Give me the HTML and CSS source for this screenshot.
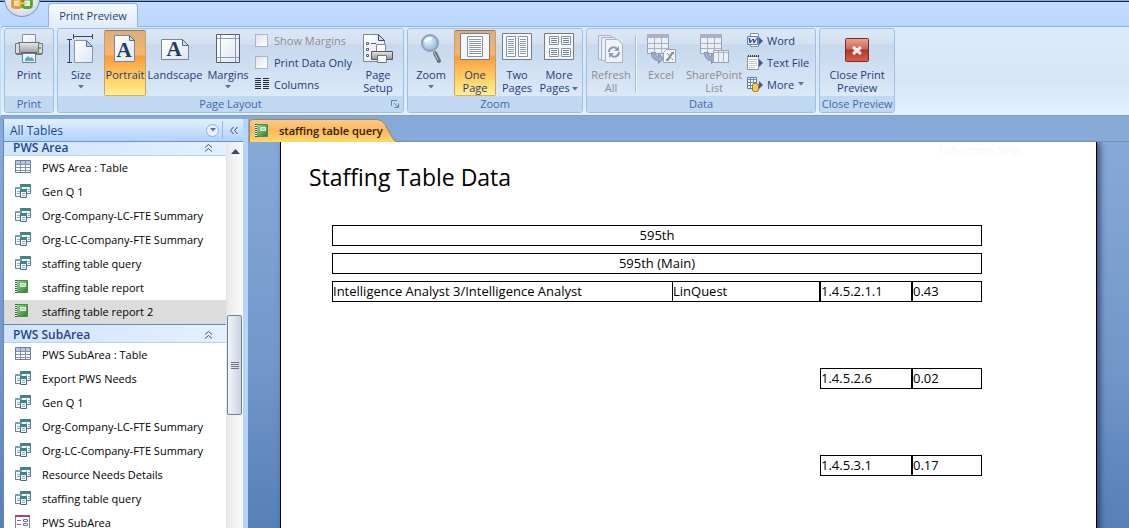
FILE: index.html
```html
<!DOCTYPE html>
<html lang="en">
<head>
  <meta charset="UTF-8" />
  <meta name="viewport" content="width=device-width, initial-scale=1.0"/>
  <title>Print Preview - staffing table query</title>
  <link rel="stylesheet" href="styles.css">
</head>
<body>

<!-- Shared icons -->
<svg class="defs" aria-hidden="true">
  <defs>
    <linearGradient id="paper" x1="0" y1="0" x2="1" y2="1">
      <stop offset="0" stop-color="#fff"/><stop offset="1" stop-color="#dfe6f2"/>
    </linearGradient>
    <linearGradient id="green" x1="0" y1="0" x2="1" y2="1">
      <stop offset="0" stop-color="#9bd690"/><stop offset="1" stop-color="#2f7d35"/>
    </linearGradient>
    <linearGradient id="red" x1="0" y1="0" x2="0" y2="1">
      <stop offset="0" stop-color="#e9a596"/><stop offset=".45" stop-color="#cf6456"/>
      <stop offset=".5" stop-color="#b23528"/><stop offset="1" stop-color="#d8604c"/>
    </linearGradient>
    <linearGradient id="metal" x1="0" y1="0" x2="0" y2="1">
      <stop offset="0" stop-color="#e9e9ea"/><stop offset="1" stop-color="#8e9096"/>
    </linearGradient>
    <radialGradient id="lens" cx=".4" cy=".35" r=".7">
      <stop offset="0" stop-color="#eaf6ff"/><stop offset="1" stop-color="#86b2dd"/>
    </radialGradient>
  </defs>
  <symbol id="i-table" viewBox="0 0 16 16">
    <path fill="#fff" stroke="#6b7ba8" d="M.5 1.500h15v12H.5z"/>
    <path fill="#b9c4e4" d="M1 2h14v3H1z"/>
    <path stroke="#8090bb" d="M1 5.500h14M1 8.500h14M1 11.500h14M5.500 2v11M10.500 2v11"/>
  </symbol>
  <symbol id="i-query" viewBox="0 0 16 16">
    <path fill="#f5fbfc" stroke="#5f8297" d="M5.500 1.500h10v9h-10z"/>
    <path fill="#3f8581" d="M5 1h11v3H5z"/>
    <path stroke="#8aaabb" d="M11.500 5v5M13 6.500h2M13 8.500h2"/>
    <path fill="#f5f9ff" stroke="#647fa0" d="M.5 4.500h6v9h-6z"/>
    <path fill="#7f9fb7" d="M0 4h7v2H0z"/>
    <path stroke="#8fa9c6" d="M2 8.500h3M2 10.500h3"/>
    <path fill="#f5f9ff" stroke="#44708b" d="M5.500 6.500h6v8h-6z"/>
    <path fill="#3f8581" d="M5 6h7v3H5z"/>
    <path stroke="#8fa9c6" d="M7 10.500h3M7 12.500h3"/>
  </symbol>
  <symbol id="i-report" viewBox="0 0 16 16">
    <path fill="url(#green)" stroke="#4c8a4a" d="M1.500 1.500h11v12h-11z"/>
    <path fill="#a9d8a0" stroke="#e3f3de" d="M5.500 4.500h5v3h-5z"/>
    <path stroke="#f4f8f2" stroke-width="2" d="M1 1v13"/>
    <path stroke="#31593a" stroke-width="2" stroke-dasharray="1 1" d="M1 1v13"/>
  </symbol>
  <symbol id="i-form" viewBox="0 0 16 16">
    <path fill="#fff" stroke="#7a7fb8" d="M.5 1.500h14v13H.5z"/>
    <path fill="#b0426f" d="M0 1h15v2H0z"/>
    <path stroke="#6d76b5" fill="none" d="M2 6.500h4M2 10.500h4M8.500 5.500h4v2h-4zM8.500 9.500h4v2h-4z"/>
  </symbol>
  <symbol id="i-up" viewBox="0 0 9 9">
    <path fill="none" stroke="#3b4f7b" d="M1 4.500l3.500-3 3.500 3M1 8.500l3.500-3 3.500 3"/>
  </symbol>
  <symbol id="i-down" viewBox="0 0 6 4">
    <path fill="#5c7396" d="M0 0h6L3 3.500z"/>
  </symbol>
  <symbol id="i-grid" viewBox="0 0 32 32">
    <path fill="#eceff6" stroke="#98a1b8" d="M2.500 1.500h21v19h-21z"/>
    <path fill="#a9b1c5" d="M2 1h22v4H2z"/>
    <path stroke="#a8b1c6" d="M3 10.500h20M3 15.500h20M9.500 1v20M16.500 1v20"/>
    <path fill="#a0abc8" stroke="#8491b5" d="M6.500 19.500h4c0 3 1 4 3 4v-3l5 5-5 5v-3c-5 0-7-3-7-8z"/>
  </symbol>
</svg>

<div class="titlebar">
  <button class="office" aria-label="Office Button">
    <svg viewBox="0 0 36 36">
      <rect x="8" y="18" width="9" height="9" rx="2" fill="#fbe6bd" stroke="#e59a2b" stroke-width="3"/>
      <rect x="19" y="18" width="9" height="9" rx="2" fill="#e9f6df" stroke="#5d9f3a" stroke-width="3"/>
      <path stroke="#f2c45c" stroke-width="2" d="M13 22.500h10"/>
    </svg>
  </button>
  <button class="ribbon-tab">Print Preview</button>
</div>

<!-- Ribbon -->
<div class="ribbon">
  <section class="group">
    <div class="group-body">
      <button class="big w-print">
        <svg viewBox="0 0 32 32">
          <path fill="url(#paper)" stroke="#888e99" d="M9.500 12V1.500h13V12z"/>
          <path fill="url(#metal)" stroke="#6d6f75" d="M5.500 9.500h21l2 3v9h-25v-9z"/>
          <path fill="#d9dadd" stroke="#777" d="M2.500 10.500h4v10h-4zM25.500 10.500h4v10h-4z"/>
          <path fill="#5f6167" d="M8 19h16v2H8z"/>
          <path fill="#eaf4fc" stroke="#6a7c90" d="M9.500 20.500h13v9h-13z"/>
          <path fill="#5fa4c4" d="M12 26l3-3 2 2 2-1 2 3v1h-9z"/>
          <path fill="#62b548" d="M26 14h2v2h-2z"/>
        </svg>
        <span>Print</span>
      </button>
    </div>
    <h2>Print</h2>
  </section>

  <section class="group tools">
    <div class="group-body">
      <button class="big w-size">
        <svg viewBox="0 0 32 32">
          <path stroke="#35466e" d="M9 3.500h18M8.500 1v5M27.500 1v5M4.500 7v22M2 6.500h5M2 29.500h5"/>
          <path fill="url(#paper)" stroke="#8794ab" d="M9.500 7.500h12l6 6v16h-18z"/>
          <path fill="#b8cae6" stroke="#5b7096" d="M21.500 7.500v6h6z"/>
        </svg>
        <span>Size</span>
        <svg class="drop"><use href="#i-down"/></svg>
      </button>
      <button class="big w-mid active">
        <svg viewBox="0 0 32 32">
          <path fill="url(#paper)" stroke="#7c869b" d="M5.500 2.500h15l5 5v21h-20z"/>
          <path fill="#cfdcf0" stroke="#56698c" d="M20.500 2.500v5h5z"/>
          <text class="letter" x="15" y="24" text-anchor="middle">A</text>
        </svg>
        <span>Portrait</span>
      </button>
      <button class="big w-land">
        <svg viewBox="0 0 32 32">
          <path fill="url(#paper)" stroke="#7c869b" d="M2.500 6.500h21l6 6v14h-27z"/>
          <path fill="#cfdcf0" stroke="#56698c" d="M23.500 6.500v6h6z"/>
          <text class="letter" x="15" y="23" text-anchor="middle">A</text>
        </svg>
        <span>Landscape</span>
      </button>
      <button class="big w-print">
        <svg viewBox="0 0 32 32">
          <path fill="url(#paper)" stroke="#555e6e" d="M4.500 1.500h23v28h-23z"/>
          <path stroke="#8e9bb5" d="M8.500 2v27M23.500 2v27M5 5.500h22M5 24.500h22"/>
        </svg>
        <span>Margins</span>
        <svg class="drop"><use href="#i-down"/></svg>
      </button>
      <div class="stack checks">
        <label class="off"><input type="checkbox" disabled> Show Margins</label>
        <label><input type="checkbox"> Print Data Only</label>
        <button class="small">
          <svg viewBox="0 0 16 16"><path stroke="#222b3a" d="M1 2.500h6M9 2.500h6M1 4.500h6M9 4.500h6M1 6.500h6M9 6.500h6M1 8.500h6M9 8.500h6M1 10.500h6M9 10.500h6M1 12.500h6M9 12.500h6"/></svg>
          Columns
        </button>
      </div>
      <button class="big w-size">
        <svg viewBox="0 0 32 32">
          <path fill="url(#paper)" stroke="#7b879d" d="M1.500 1.500h15l6 6v21h-21z"/>
          <path fill="#cfdcf0" stroke="#3c4c6b" d="M16.500 1.500v6h6z"/>
          <path fill="#fff" stroke="#55607a" d="M4.500 9.500h2v2h-2zM4.500 15.500h2v2h-2zM4.500 21.500h2v2h-2z"/>
          <path stroke="#55607a" d="M9 10.500h5"/>
          <path fill="#fff" stroke="#888" d="M14.500 19v-7.500h9V19z"/>
          <path fill="url(#metal)" stroke="#55575d" d="M9.500 18.500h21v8h-21z"/>
          <path fill="#fff" stroke="#6d7587" d="M15.500 22.500h9v7h-9z"/>
        </svg>
        <span>Page<br>Setup</span>
      </button>
    </div>
    <h2>Page Layout</h2>
    <button class="launcher" aria-label="Page Setup dialog">
      <svg viewBox="0 0 8 8"><path fill="none" stroke="#6484b0" d="M.5 6V.5H6M3 3l4 4M7.500 3.500v4h-4"/></svg>
    </button>
  </section>

  <section class="group tools">
    <div class="group-body">
      <button class="big w-size">
        <svg viewBox="0 0 32 32">
          <path stroke="#6d727c" stroke-width="4" stroke-linecap="round" d="M20 20l4 8"/>
          <path stroke="#c5c9d1" d="M19 19l4 8"/>
          <circle cx="15" cy="10" r="8" fill="url(#lens)" stroke="#8ea0bb" stroke-width="2"/>
          <path fill="none" stroke="#fff" stroke-width="2" d="M10 9c1-3 4-4 7-3"/>
        </svg>
        <span>Zoom</span>
        <svg class="drop"><use href="#i-down"/></svg>
      </button>
      <button class="big w-mid active">
        <svg viewBox="0 0 32 32">
          <path fill="#f5f6fa" stroke="#747d90" d="M1.500.5h29v26h-29z"/>
          <path fill="#fff" stroke="#8791a5" d="M8.500 3.500h15v20h-15z"/>
          <path stroke="#8b98b0" d="M10 6.500h12M10 8.500h12M10 10.500h12M10 12.500h12M10 14.500h12M10 16.500h12M10 18.500h12M10 20.500h12"/>
        </svg>
        <span>One<br>Page</span>
      </button>
      <button class="big w-mid">
        <svg viewBox="0 0 32 32">
          <path fill="#f5f6fa" stroke="#747d90" d="M1.500.5h29v26h-29z"/>
          <path fill="#fff" stroke="#8791a5" d="M5.500 3.500h9v20h-9zM17.500 3.500h9v20h-9z"/>
          <path stroke="#8b98b0" d="M7 6.500h6M7 8.500h6M7 10.500h6M7 12.500h6M7 14.500h6M7 16.500h6M7 18.500h6M7 20.500h6M19 6.500h6M19 8.500h6M19 10.500h6M19 12.500h6M19 14.500h6M19 16.500h6M19 18.500h6M19 20.500h6"/>
        </svg>
        <span>Two<br>Pages</span>
      </button>
      <button class="big w-mid">
        <svg viewBox="0 0 32 32">
          <path fill="#f5f6fa" stroke="#747d90" d="M1.500.5h29v26h-29z"/>
          <path fill="#fff" stroke="#8791a5" d="M6.500 3.500h9v8h-9zM18.500 3.500h9v8h-9zM6.500 15.500h9v8h-9zM18.500 15.500h9v8h-9z"/>
          <path stroke="#6f7f9c" d="M8 5.500h6M8 7.500h6M8 9.500h6M20 5.500h6M20 7.500h6M20 9.500h6M8 17.500h6M8 19.500h6M8 21.500h6M20 17.500h6M20 19.500h6M20 21.500h6"/>
        </svg>
        <span>More<br>Pages <svg class="drop"><use href="#i-down"/></svg></span>
      </button>
    </div>
    <h2>Zoom</h2>
  </section>

  <section class="group tools">
    <div class="group-body">
      <button class="big w-print" disabled>
        <svg viewBox="0 0 32 32">
          <path fill="#e6ebf4" stroke="#a9b3c6" d="M3.500 2.500h12l4 4v20h-16z"/>
          <path fill="#e9edf5" stroke="#a9b3c6" d="M6.500 4.500h13l4 4v19h-17z"/>
          <path fill="#f1f3f8" stroke="#a9b3c6" d="M10.500 6.500h12l5 5v18h-17z"/>
          <path fill="none" stroke="#949cad" stroke-width="2" d="M14 19c0-5 6-6 8-3M24 19c0 5-6 6-8 3"/>
          <path fill="#949cad" d="M24 13v5h-5zM14 25v-5h5z"/>
        </svg>
        <span>Refresh<br>All</span>
      </button>
      <div class="separator"></div>
      <button class="big w-print" disabled>
        <svg viewBox="0 0 32 32">
          <use href="#i-grid"/>
          <path fill="#f2f4f8" stroke="#98a1b5" d="M18.500 19.500l3-3h9v13h-12z"/>
          <path stroke="#858f9f" stroke-width="2" d="M21 27h2l4-7h2"/>
          <path stroke="#858f9f" d="M22 20l6 7"/>
        </svg>
        <span>Excel</span>
      </button>
      <button class="big w-land" disabled>
        <svg viewBox="0 0 32 32">
          <use href="#i-grid"/>
          <path fill="#eceff6" stroke="#98a1b8" d="M15.500 17.500h15v12h-15z"/>
          <path stroke="#a8b1c6" d="M16 19.500h14M20.500 18v12M25.500 18v12"/>
        </svg>
        <span>SharePoint<br>List</span>
      </button>
      <div class="stack">
        <button class="small">
          <svg viewBox="0 0 16 16">
            <path fill="#fff" stroke="#7e8fb0" d="M3.500 1.500h8v13h-8z"/>
            <path fill="#e7edf8" stroke="#627cae" d="M.5 4.500h10v8H.5z"/>
            <path fill="none" stroke="#24448b" d="M2 6l1 5 3-4 1 4 3-5M2.500 6l1 4M6.500 7l1 3"/>
            <path fill="#3b5c98" d="M12 5l4 4-4 4z"/>
          </svg>
          Word
        </button>
        <button class="small">
          <svg viewBox="0 0 16 16">
            <path fill="#fff" stroke="#8b94a5" d="M.5 2.500h11v13H.5z"/>
            <path stroke="#333c4c" stroke-width="2" stroke-dasharray="1 1" d="M1 2h11"/>
            <path stroke="#c3cbd9" d="M2 5.500h8M2 7.500h8M2 9.500h8M2 11.500h8M2 13.500h6"/>
            <path fill="#3b5c98" d="M12 5l4 4-4 4z"/>
          </svg>
          Text File
        </button>
        <button class="small">
          <svg viewBox="0 0 16 16">
            <path fill="#fff" stroke="#5e78ab" d="M.5 1.500h9v11h-9z"/>
            <path stroke="#6b84b5" d="M1 3.500h8M1 6.500h8M1 9.500h8M3.500 2v10M6.500 2v10"/>
            <path fill="#f3cb54" stroke="#a37c1f" d="M5.500 8.500c1-1.500 5-1.500 6 0v6c-1 1.500-5 1.500-6 0z"/>
            <path fill="#3b5c98" d="M12 5l4 4-4 4z"/>
          </svg>
          More <svg class="drop"><use href="#i-down"/></svg>
        </button>
      </div>
    </div>
    <h2>Data</h2>
  </section>

  <section class="group">
    <div class="group-body">
      <button class="big w-close">
        <svg viewBox="0 0 32 32">
          <rect x="4.500" y="5.500" width="23" height="23" rx="1" fill="url(#red)" stroke="#7c2a24"/>
          <path stroke="#f7efee" stroke-width="3" d="M12 14l8 7M20 14l-8 7"/>
        </svg>
        <span>Close Print<br>Preview</span>
      </button>
    </div>
    <h2>Close Preview</h2>
  </section>
</div>

<div class="workspace">

  <!-- Navigation Pane -->
  <aside class="nav-pane">
    <header class="nav-header">
      <span>All Tables</span>
      <button class="nav-menu" aria-label="Choose objects"><svg class="drop"><use href="#i-down"/></svg></button>
      <button class="nav-close" aria-label="Close pane">
        <svg viewBox="0 0 9 9"><path fill="none" stroke="#3b4f7b" d="M4.500 1l-3 3.500 3 3.500M8.500 1l-3 3.500 3 3.500"/></svg>
      </button>
    </header>
    <div class="nav-body">
      <div class="nav-list">
        <h3>PWS Area <svg><use href="#i-up"/></svg></h3>
        <ul>
          <li><a href="#"><svg><use href="#i-table"/></svg>PWS Area : Table</a></li>
          <li><a href="#"><svg><use href="#i-query"/></svg>Gen Q 1</a></li>
          <li><a href="#"><svg><use href="#i-query"/></svg>Org-Company-LC-FTE Summary</a></li>
          <li><a href="#"><svg><use href="#i-query"/></svg>Org-LC-Company-FTE Summary</a></li>
          <li><a href="#"><svg><use href="#i-query"/></svg>staffing table query</a></li>
          <li><a href="#"><svg><use href="#i-report"/></svg>staffing table report</a></li>
          <li><a href="#" class="selected"><svg><use href="#i-report"/></svg>staffing table report 2</a></li>
        </ul>
        <h3>PWS SubArea <svg><use href="#i-up"/></svg></h3>
        <ul>
          <li><a href="#"><svg><use href="#i-table"/></svg>PWS SubArea : Table</a></li>
          <li><a href="#"><svg><use href="#i-query"/></svg>Export PWS Needs</a></li>
          <li><a href="#"><svg><use href="#i-query"/></svg>Gen Q 1</a></li>
          <li><a href="#"><svg><use href="#i-query"/></svg>Org-Company-LC-FTE Summary</a></li>
          <li><a href="#"><svg><use href="#i-query"/></svg>Org-LC-Company-FTE Summary</a></li>
          <li><a href="#"><svg><use href="#i-query"/></svg>Resource Needs Details</a></li>
          <li><a href="#"><svg><use href="#i-query"/></svg>staffing table query</a></li>
          <li><a href="#"><svg><use href="#i-form"/></svg>PWS SubArea</a></li>
        </ul>
      </div>
      <div class="scrollbar">
        <svg class="scroll-up" viewBox="0 0 9 5"><path fill="#3f4860" d="M0 5l4.500-5L9 5z"/></svg>
        <div class="thumb"><i></i></div>
      </div>
    </div>
  </aside>

  <main class="document">
    <div class="doc-tabs">
      <button class="doc-tab">
        <svg class="tab-shape" viewBox="0 0 148 23" preserveAspectRatio="none">
          <defs>
            <linearGradient id="tab" x1="0" y1="0" x2="0" y2="1">
              <stop offset="0" stop-color="#fbc98c"/><stop offset=".5" stop-color="#fdb75d"/><stop offset="1" stop-color="#ffd968"/>
            </linearGradient>
          </defs>
          <path fill="url(#tab)" stroke="#a98353" d="M.5 23V3.500q0-3 3-3H128q5 0 8 5l6 11q3 6 6 6.500"/>
        </svg>
        <svg class="tab-icon"><use href="#i-report"/></svg>
        <span>staffing table query</span>
      </button>
    </div>
    <div class="canvas">
      <article class="page">
        <span class="snip">Full-screen Snip</span>
        <h1>Staffing Table Data</h1>
        <table>
          <colgroup>
            <col class="col-job">
            <col class="col-company">
            <col class="col-area">
            <col>
          </colgroup>
          <thead>
            <tr><th colspan="4"><div class="box">595th</div></th></tr>
            <tr><th colspan="4"><div class="box">595th (Main)</div></th></tr>
          </thead>
          <tbody>
            <tr>
              <td><div class="box open">Intelligence Analyst 3/Intelligence Analyst</div></td>
              <td><div class="box">LinQuest</div></td>
              <td><div class="box">1.4.5.2.1.1</div></td>
              <td><div class="box">0.43</div></td>
            </tr>
            <tr>
              <td></td>
              <td></td>
              <td><div class="box">1.4.5.2.6</div></td>
              <td><div class="box">0.02</div></td>
            </tr>
            <tr>
              <td></td>
              <td></td>
              <td><div class="box">1.4.5.3.1</div></td>
              <td><div class="box">0.17</div></td>
            </tr>
          </tbody>
        </table>
      </article>
    </div>
  </main>
</div>

</body>
</html>
```
FILE: styles.css
```css
/* Global styles */
* {
  box-sizing: border-box;
}

body {
  margin: 0;
  height: 100vh;
  display: flex;
  flex-direction: column;
  overflow: hidden;
  font-family: "Open Sans", "Noto Sans", sans-serif;
  font-size: 11px;
  color: #1e3c7b;
  background-color: #bfdbff;
}

button {
  font: inherit;
  color: inherit;
  background: none;
  border: 1px solid transparent;
  padding: 0;
  margin: 0;
}

svg {
  display: block;
  flex: none;
}

h1, h2, h3, ul {
  margin: 0;
  padding: 0;
  font-weight: normal;
}

.defs {
  position: absolute;
  width: 0;
  height: 0;
}

.drop {
  width: 6px;
  height: 4px;
}

/* Title bar and ribbon tab */
.titlebar {
  position: relative;
  flex: none;
  height: 26px;
  padding: 2px 0 0 48px;
  border-top: 1px solid #8ba5c9;
  background: linear-gradient(#13284d 0, #13284d 1px, #c3dcff 1px, #bad6fc 100%);
}

.office {
  position: absolute;
  left: 4px;
  top: -20px;
  width: 36px;
  height: 36px;
  border-radius: 50%;
  border-color: #7d93b5;
  background: radial-gradient(circle at 50% 40%, #fff, #dfe6f0 60%, #b5c4d9);
}

.ribbon-tab {
  height: 24px;
  width: 90px;
  border: 1px solid #8db2e3;
  border-bottom: none;
  border-radius: 4px 4px 0 0;
  background: linear-gradient(#f4f9ff, #e0ecfa);
}

/* Ribbon */
.ribbon {
  flex: none;
  display: flex;
  gap: 3px;
  height: 90px;
  margin-left: 1px;
  padding: 1px 3px 2px;
  border-top: 1px solid #8db2e3;
  border-bottom: 1px solid #7f9fc9;
  border-top-left-radius: 4px;
  background: linear-gradient(#dcebfb, #d5e6f9 60%, #e0f2ff);
}

.group {
  position: relative;
  display: flex;
  flex-direction: column;
  border: 1px solid #9fbfe0;
  border-radius: 3px;
  background: linear-gradient(#dde8f5 0, #d3e0f0 15px, #c7d8ed 16px, #dbe9f8 68px);
  overflow: hidden;
}

.group h2 {
  flex: none;
  height: 16px;
  line-height: 16px;
  font-size: 11px;
  text-align: center;
  white-space: nowrap;
  color: #3e6aaa;
  background-color: #c1d8f1;
}

.group-body {
  display: flex;
  flex: 1;
  min-height: 0;
  padding-top: 1px;
}

.tools .group-body {
  padding-right: 2px;
}

.big {
  display: flex;
  flex-direction: column;
  align-items: center;
  height: 66px;
  padding-top: 2px;
  line-height: 13px;
  white-space: nowrap;
  border-radius: 2px;
}

.big > svg:first-child {
  width: 32px;
  height: 32px;
  margin-bottom: 3px;
}

.big > .drop {
  margin-top: 4px;
}

.big span .drop,
.small .drop {
  display: inline-block;
  vertical-align: middle;
}

.big:disabled {
  color: #8d8d8d;
}

.big.active {
  border-color: #8e7957 #c2a265 #d9b34f;
  background: linear-gradient(#dcae7d 0, #fbb569 24px, #fb9b3d 25px, #ffd56a 50px, #fff09a 100%);
}

.w-print { width: 48px; }
.w-size { width: 46px; }
.w-mid { width: 42px; }
.w-land { width: 58px; }
.w-close { width: 74px; }

.letter {
  font-family: "Liberation Serif", serif;
  font-size: 21px;
  font-weight: bold;
  fill: #263a66;
}

.stack {
  display: flex;
  flex-direction: column;
  gap: 2px;
  padding: 0 4px;
}

.checks {
  width: 103px;
  padding: 0 2px;
}

.stack label,
.small {
  display: flex;
  align-items: center;
  gap: 4px;
  height: 20px;
  border: none;
  white-space: nowrap;
}

.small svg:first-child {
  width: 16px;
  height: 16px;
}

.off {
  color: #8d8d8d;
}

.stack input {
  appearance: none;
  width: 13px;
  height: 13px;
  margin: 0 2px 0 1px;
  border: 1px solid #abb5c6;
  background: linear-gradient(135deg, #dfe3ea, #fff);
}

.separator {
  width: 2px;
  height: 57px;
  margin-top: 5px;
  border-left: 1px solid #a5bcd9;
  border-right: 1px solid #eef5fd;
}

.launcher {
  position: absolute;
  right: 4px;
  bottom: 4px;
  border: none;
}

.launcher svg {
  width: 8px;
  height: 8px;
}

/* Workspace */
.workspace {
  flex: 1;
  min-height: 0;
  display: flex;
  padding: 3px 0 0 3px;
  background: linear-gradient(#86a9d8 0, #86a9d8 24px, #7397c9 60%, #5680b7 100%);
}

.nav-pane {
  flex: none;
  width: 245px;
  display: flex;
  flex-direction: column;
  border-left: 1px solid #6787b5;
  border-right: 5px solid #b5d5fb;
}

.nav-header {
  flex: none;
  display: flex;
  align-items: center;
  height: 23px;
  padding-left: 6px;
  font-size: 12px;
  color: #21437f;
  background: linear-gradient(#e2efff, #afd2ff);
  border-bottom: 1px solid #6593cf;
}

.nav-header span {
  flex: 1;
}

.nav-menu {
  display: grid;
  place-items: center;
  width: 13px;
  height: 13px;
  margin-right: 3px;
  border: 1px solid #8fb0dd;
  border-radius: 50%;
  background-color: #e6f1ff;
}

.nav-close {
  display: grid;
  place-items: center;
  width: 21px;
  height: 18px;
  border: none;
  border-left: 1px solid #8fb8ef;
}

.nav-close svg,
.nav-list h3 svg {
  width: 9px;
  height: 9px;
}

.nav-body {
  flex: 1;
  min-height: 0;
  display: flex;
  overflow: hidden;
  background-color: #fff;
}

/* list is scrolled a little way down */
.nav-list {
  flex: 1;
  margin-top: -5px;
}

.nav-list h3 {
  display: flex;
  align-items: center;
  justify-content: space-between;
  height: 19px;
  padding: 2px 13px 0 9px;
  line-height: 16px;
  font-size: 12px;
  font-weight: 600;
  color: #1f4686;
  background: linear-gradient(90deg, #d0e4fd, #e3f0ff);
  border-top: 1px solid #6787ae;
  border-bottom: 1px solid #b5d1f3;
}

.nav-list ul {
  list-style: none;
}

.nav-list a {
  display: flex;
  align-items: center;
  gap: 11px;
  height: 24px;
  padding: 0 0 2px 11px;
  color: #000;
  text-decoration: none;
  white-space: nowrap;
}

.nav-list a svg {
  width: 16px;
  height: 16px;
}

.nav-list .selected {
  background-color: #dcdcdc;
}

.scrollbar {
  position: relative;
  width: 17px;
  border-left: 1px solid #e2e4e8;
  background: linear-gradient(90deg, #e9eaec, #fafafa);
}

.scroll-up {
  width: 9px;
  height: 5px;
  margin: 7px auto;
}

.thumb {
  position: absolute;
  top: 173px;
  left: 0;
  right: 1px;
  height: 100px;
  display: grid;
  place-items: center;
  border: 1px solid #6f7f9e;
  border-radius: 2px;
  background: linear-gradient(90deg, #f0f3f8, #ccd3e0);
}

.thumb i {
  width: 8px;
  height: 7px;
  background: repeating-linear-gradient(#6b7890 0, #6b7890 1px, transparent 1px, transparent 2px);
}

/* Document area */
.document {
  flex: 1;
  min-width: 0;
  display: flex;
  flex-direction: column;
}

.doc-tabs {
  flex: none;
  height: 23px;
  padding-left: 1px;
  border-bottom: 1px solid #6f91bf;
}

.doc-tab {
  position: relative;
  display: flex;
  align-items: center;
  gap: 8px;
  width: 148px;
  height: 23px;
  padding-left: 6px;
  border: none;
  font-weight: 600;
  color: #2d1d05;
  white-space: nowrap;
}

.tab-shape {
  position: absolute;
  inset: 0;
  width: 100%;
  height: 100%;
}

.tab-icon {
  width: 16px;
  height: 16px;
}

.tab-icon,
.doc-tab span {
  position: relative;
}

.canvas {
  flex: 1;
  min-height: 0;
  overflow: hidden;
}

.page {
  position: relative;
  max-width: 817px;
  min-height: 100%;
  margin: 0 auto;
  padding: 17px 28px;
  color: #000;
  background-color: #fff;
  border: solid #000;
  border-width: 0 1px;
  box-shadow: 3px 0 6px rgba(20, 40, 80, 0.7);
}

.snip {
  position: absolute;
  top: 0;
  right: 76px;
  color: #f6f6f6;
}

.page h1 {
  height: 66px;
  font-size: 23px;
  line-height: 36px;
}

.page table {
  width: 650px;
  margin-left: 23px;
  border-collapse: collapse;
  table-layout: fixed;
  font-size: 13px;
}

.page th,
.page td {
  height: 28px;
  padding: 0;
  font-weight: normal;
  vertical-align: top;
}

.page td {
  height: 87px;
}

/* column widths, the last one takes the rest */
.col-job { width: 340px; }
.col-company { width: 148px; }
.col-area { width: 92px; }

.box {
  height: 21px;
  line-height: 19px;
  border: 1px solid #000;
  white-space: nowrap;
}

.open {
  border-right: none;
}
```
